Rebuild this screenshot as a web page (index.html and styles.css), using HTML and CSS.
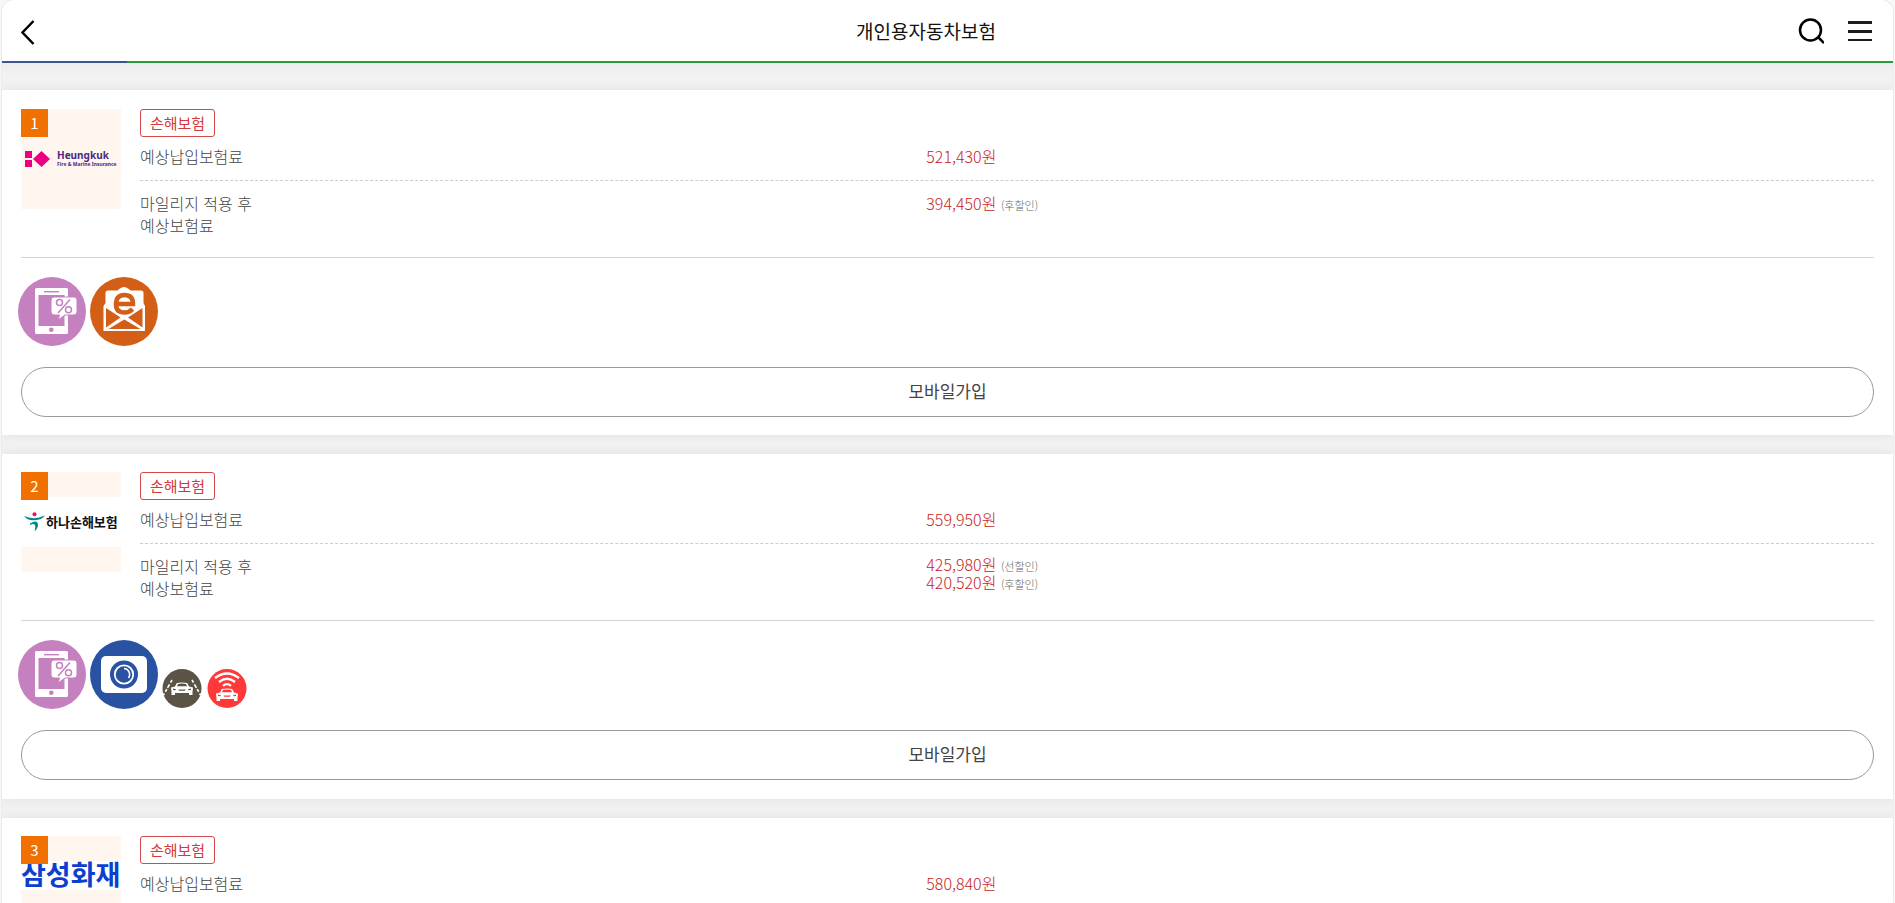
FILE: index.html
```
<!DOCTYPE html>
<html lang="ko">
<head>
    <meta charset="UTF-8">
    <meta name="viewport" content="width=device-width, initial-scale=1.0">
    <title>개인용자동차보험</title>
    <link rel="stylesheet" href="styles.css">
</head>
<body>
    <!-- 공용 아이콘 -->
    <svg class="sprite" aria-hidden="true">
        <symbol id="ico-mobile" viewBox="0 0 68 69">
            <ellipse cx="34" cy="34.5" rx="34" ry="34.5" fill="#c580bf"/>
            <rect x="17" y="11" width="33" height="46" rx="1.5" fill="#fff"/>
            <path d="M26 14.7H41" stroke="#c580bf" stroke-width="1.4"/>
            <rect x="20.500" y="18" width="26" height="31" fill="#c580bf"/>
            <circle cx="33.300" cy="52.700" r="2.300" fill="#c580bf"/>
            <path d="M36 20h20q3 0 3 3v12q0 3-3 3h-9l-7 5 1.500-5H36q-3 0-3-3V23q0-3 3-3z" fill="#fff" stroke="#c580bf" stroke-width="1"/>
            <g fill="none" stroke="#c580bf" stroke-width="1.500">
                <circle cx="41.500" cy="25.500" r="3"/>
                <circle cx="50.500" cy="32.700" r="3"/>
                <path d="M52 22.500L40 36"/>
            </g>
        </symbol>
        <symbol id="ico-email" viewBox="0 0 68 69">
            <ellipse cx="34" cy="34.500" rx="34" ry="34.500" fill="#d35f17"/>
            <path d="M13.500 29L15.500 26V16q0-2.500 2.500-2.500H27.500Q31 10 34 10t6.500 3.500H51q2.500 0 2.500 2.500V26l1.500 3V54H13.500z" fill="#fff"/>
            <path d="M16 31L30.500 40.500 16 50.500zM52.500 31L38 40.500 52.500 50.500zM18.500 52L34.300 42.500 50.500 52z" fill="#d35f17"/>
            <path d="M26 27H43Q43 18 34.500 18T26 27.500Q26 35.500 34.500 35.500 39.500 35.500 42.500 32" fill="none" stroke="#d35f17" stroke-width="4.500"/>
        </symbol>
        <symbol id="ico-camera" viewBox="0 0 68 69">
            <ellipse cx="34" cy="34.500" rx="34" ry="34.500" fill="#2a52a2"/>
            <rect x="11" y="16" width="46" height="37" rx="5" fill="#fff"/>
            <circle cx="34" cy="34.500" r="14" fill="#2a52a2"/>
            <circle cx="34" cy="34.500" r="9.200" fill="none" stroke="#fff" stroke-width="1.800"/>
            <path d="M34 28.500a6 6 0 0 1 4.500 9.500" fill="none" stroke="#fff" stroke-width="1.500"/>
        </symbol>
        <symbol id="car" viewBox="0 0 24 14">
            <path d="M5 4.500L6.800 1Q12-.2 17.200 1L19 4.500 23 5.500 22.500 10V13H19V11H5V13H1.500V10L1 5.500z" fill="#fff"/>
            <path d="M7 4.300L8 2Q12 1.200 16 2L17 4.300zM3 6.500L6 7.300 5.500 8.300 3 8zM21 6.500L18 7.300 18.500 8.300 21 8zM8.500 7.500H15.500L15 8.700H9z" class="car-cut"/>
        </symbol>
        <symbol id="ico-lane" viewBox="0 0 41 40">
            <circle cx="20" cy="19.500" r="19.500" fill="#5b5345"/>
            <path d="M10 11L1.500 26M30 11L38.500 26" stroke="#fff" stroke-width="1.600" stroke-dasharray="3 2 4 1.500"/>
            <use href="#car" x="8" y="13" width="24" height="14"/>
        </symbol>
        <symbol id="ico-crash" viewBox="0 0 41 40">
            <circle cx="20" cy="19.500" r="19.500" fill="#ff3939"/>
            <g fill="none" stroke="#fff" stroke-width="2.300">
                <path d="M8 9Q20 0 32 9M12 13Q20 6.500 28 13M16 16.800Q20 13.500 24 16.800"/>
            </g>
            <use href="#car" x="8" y="19" width="24" height="14"/>
        </symbol>
    </svg>

    <div class="wrap">
        <header class="header">
            <button type="button" class="btn-icon" aria-label="이전">
                <svg width="16" height="28" viewBox="0 0 16 28"><path d="M13.500 4L2.500 15.500 13.500 27" fill="none" stroke="#000" stroke-width="2.500"/></svg>
            </button>
            <h1>개인용자동차보험</h1>
            <div class="header-right">
                <button type="button" class="btn-icon" aria-label="검색">
                    <svg width="26" height="26" viewBox="0 0 26 26"><g fill="none" stroke="#000" stroke-width="2.500"><circle cx="12.500" cy="12" r="10.500"/><path d="M20 19L26 25"/></g></svg>
                </button>
                <button type="button" class="btn-icon" aria-label="메뉴">
                    <svg width="24" height="20" viewBox="0 0 24 20"><path d="M0 0H24V3H0zM0 9H24V12H0zM0 18H24V20H0z" fill="#1d1d1f"/></svg>
                </button>
            </div>
        </header>

        <main class="list">
            <section class="card">
                <div class="info">
                    <div class="logo">
                        <span class="rank">1</span>
                        <svg class="logo-img" width="100" height="50" viewBox="0 0 100 50" role="img" aria-label="Heungkuk Fire &amp; Marine Insurance">
                            <path d="M4 17h7v7H4zM4 26h7v7H4zM20.500 17l8.500 8-8.500 8-8.500-8z" fill="#ec0080"/>
                            <text x="36" y="25" class="heungkuk">Heungkuk</text>
                            <text x="36" y="32" class="heungkuk-sub">Fire &amp; Marine Insurance</text>
                        </svg>
                    </div>
                    <div class="detail">
                        <span class="tag">손해보험</span>
                        <dl class="row">
                            <dt>예상납입보험료</dt>
                            <dd>521,430원</dd>
                        </dl>
                        <dl class="row mileage">
                            <dt>마일리지 적용 후<br>예상보험료</dt>
                            <dd>394,450원 <small>(후할인)</small></dd>
                        </dl>
                    </div>
                </div>
                <div class="icons">
                    <svg width="68" height="69"><use href="#ico-mobile"/></svg>
                    <svg width="68" height="69"><use href="#ico-email"/></svg>
                </div>
                <button type="button" class="btn-join">모바일가입</button>
            </section>

            <section class="card">
                <div class="info">
                    <div class="logo">
                        <span class="rank">2</span>
                        <div class="logo-img hana">
                            <svg width="22" height="20" viewBox="0 0 22 20">
                                <circle cx="10.500" cy="2.300" r="2" fill="#e5175c"/>
                                <path d="M0 4Q10 8.500 21 3.500 18 8 10.500 8.200 3 8.500 0 4z" fill="#008c86"/>
                                <path d="M6 11.500Q13 7.500 14 12 14.300 16 10.500 19.500 12 14 10.500 12.500 9 11.500 6 13z" fill="#008c86"/>
                            </svg>
                            <b>하나손해보험</b>
                        </div>
                    </div>
                    <div class="detail">
                        <span class="tag">손해보험</span>
                        <dl class="row">
                            <dt>예상납입보험료</dt>
                            <dd>559,950원</dd>
                        </dl>
                        <dl class="row mileage">
                            <dt>마일리지 적용 후<br>예상보험료</dt>
                            <dd class="multi">425,980원 <small>(선할인)</small><br>420,520원 <small>(후할인)</small></dd>
                        </dl>
                    </div>
                </div>
                <div class="icons">
                    <svg width="68" height="69"><use href="#ico-mobile"/></svg>
                    <svg width="68" height="69"><use href="#ico-camera"/></svg>
                    <svg class="lane" width="41" height="40"><use href="#ico-lane"/></svg>
                    <svg class="crash" width="41" height="40"><use href="#ico-crash"/></svg>
                </div>
                <button type="button" class="btn-join">모바일가입</button>
            </section>

            <section class="card">
                <div class="info">
                    <div class="logo">
                        <span class="rank">3</span>
                        <div class="logo-img samsung">삼성화재</div>
                    </div>
                    <div class="detail">
                        <span class="tag">손해보험</span>
                        <dl class="row">
                            <dt>예상납입보험료</dt>
                            <dd>580,840원</dd>
                        </dl>
                    </div>
                </div>
            </section>
        </main>
    </div>
</body>
</html>
```
FILE: styles.css
```
* {
    box-sizing: border-box;
    margin: 0;
    padding: 0;
}

body {
    background-color: #f8f8f8;
    color: #444;
    font-family: "Noto Sans CJK KR", sans-serif;
    font-size: 16px;
}

button {
    font-family: inherit;
    cursor: pointer;
}

svg {
    display: block;
}

.sprite {
    position: absolute;
    width: 0;
    height: 0;
}

.wrap {
    height: 100vh;
    margin: 0 2px;
    background-color: #f2f2f2;
    box-shadow: 0 0 2px rgba(0, 0, 0, 0.2);
    border-radius: 12px 12px 0 0;
    overflow-y: auto;
    scrollbar-width: none;
}

/* 상단 */
.header {
    display: grid;
    grid-template-columns: 1fr auto 1fr;
    align-items: center;
    height: 63px;
    padding: 0 21px 2px 18px;
    background: linear-gradient(to right, #3b5591 125px, #2b9a3a 125px) bottom / 100% 2px no-repeat #fff;
}

.header h1 {
    margin-right: 40px;
    color: #111;
    font-size: 19px;
    font-weight: 400;
    line-height: 28px;
}

.header-right {
    display: flex;
    justify-content: flex-end;
    align-items: center;
    gap: 24px;
}

.btn-icon {
    justify-self: start;
    border: none;
    background: none;
}

/* 목록 */
.list {
    display: flex;
    flex-direction: column;
    gap: 19px;
    padding-top: 27px;
    background: linear-gradient(#ededed, #f2f2f2 14px);
}

.card {
    padding: 19px 19px 18px;
    background-color: #fff;
    box-shadow: 0 0 12px rgba(0, 0, 0, 0.08);
}

.card + .card {
    padding-top: 18px;
    padding-bottom: 19px;
}

.info {
    display: flex;
    gap: 19px;
    height: 149px;
    border-bottom: 1px solid #d5d5d5;
}

.logo {
    position: relative;
    flex: none;
    width: 100px;
    height: 100px;
    padding-top: 25px;
    background-color: #fff6f0;
}

.rank {
    position: absolute;
    top: 0;
    left: 0;
    z-index: 1;
    width: 27px;
    height: 28px;
    background-color: #f07000;
    color: #fff;
    font-size: 15px;
    line-height: 28px;
    text-align: center;
}

.heungkuk {
    fill: #4b2a80;
    font: bold 10px "Noto Sans", sans-serif;
}

.heungkuk-sub {
    fill: #4b2a80;
    font: bold 5px "Noto Sans", sans-serif;
}

.hana {
    display: flex;
    align-items: center;
    height: 50px;
    padding-left: 3px;
    background-color: #fff;
    color: #111;
    font-size: 13px;
    line-height: 16px;
    white-space: nowrap;
}

.samsung {
    height: 29px;
    background-color: #fff;
    color: #0b3fd0;
    font-size: 27px;
    font-weight: bold;
    line-height: 26px;
    white-space: nowrap;
}

.detail {
    flex: 1;
}

.tag {
    display: block;
    width: 75px;
    height: 28px;
    border: 1px solid #d5494b;
    border-radius: 3px;
    color: #d5393b;
    font-size: 15px;
    font-weight: 400;
    line-height: 26px;
    text-align: center;
}

.row {
    display: grid;
    grid-template-columns: 45% 1fr;
    column-gap: 6px;
    height: 44px;
    padding-top: 8px;
    border-bottom: 1px dashed #ccc;
    font-weight: 300;
    line-height: 22px;
}

.mileage {
    height: auto;
    padding-top: 11px;
    border-bottom: none;
}

.row dd {
    color: #c81e22;
}

.row .multi {
    line-height: 18px;
}

.row small {
    color: #666;
    font-size: 11px;
    line-height: 11px;
}

.icons {
    display: flex;
    align-items: flex-end;
    gap: 4px;
    margin: 19px 0 21px -3px;
}

.lane {
    color: #5b5345;
}

.crash {
    color: #ff3939;
}

.car-cut {
    fill: currentColor;
}

.btn-join {
    display: block;
    width: 100%;
    height: 50px;
    padding-bottom: 3px;
    border: 1px solid #999;
    border-radius: 25px;
    background-color: #fff;
    color: #444;
    font-size: 17px;
    font-weight: 400;
}
```
